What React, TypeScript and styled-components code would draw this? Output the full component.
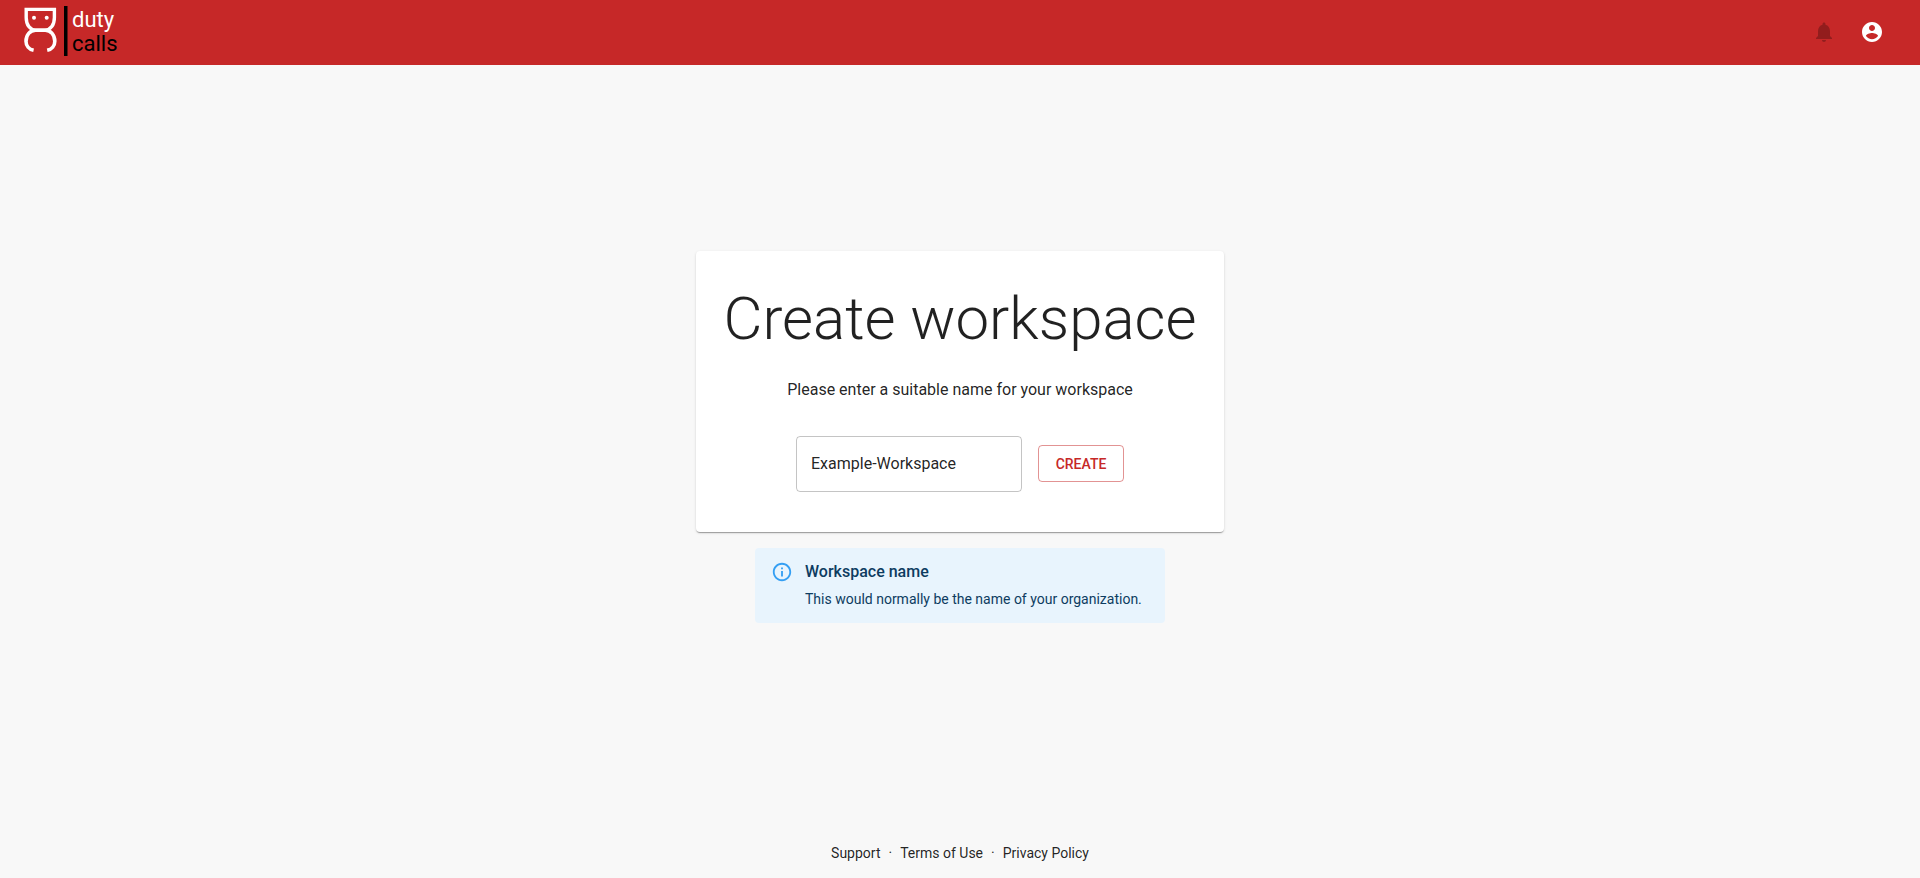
import React, { useState } from "react";
import styled, { createGlobalStyle } from "styled-components";

const GlobalStyle = createGlobalStyle`
  *, *::before, *::after { box-sizing: border-box; }
  body {
    margin: 0;
    background: #f8f8f8;
    color: rgba(0, 0, 0, 0.87);
    font-family: Roboto, "Liberation Sans", sans-serif;
    font-size: 16px;
    line-height: 24px;
  }
`;

const Page = styled.div`
  display: flex;
  flex-direction: column;
  min-height: 100vh;
`;

const Header = styled.header`
  display: flex;
  align-items: center;
  justify-content: space-between;
  height: 65px;
  padding: 0 24px 1px;
  background: #c62828;
`;

const Brand = styled.a`
  display: flex;
  align-items: center;
  gap: 4px;
  color: #000;
  text-decoration: none;
`;

const Mark = styled.svg`
  display: block;
  width: 44px;
  height: 52px;
`;

const BrandName = styled.span`
  display: flex;
  flex-direction: column;
  font-size: 22px;
  line-height: 24px;
`;

const BrandTop = styled.span`
  color: #fff;
`;

const Actions = styled.div`
  display: flex;
  align-items: center;
`;

const IconButton = styled.button`
  display: flex;
  padding: 12px;
  border: 0;
  border-radius: 50%;
  background: transparent;
  color: #fff;
  cursor: pointer;

  &:disabled {
    color: rgba(0, 0, 0, 0.26);
    cursor: default;
  }
`;

const Glyph = styled.svg<{ $size: number }>`
  display: block;
  flex: none;
  width: ${(p) => p.$size}px;
  height: ${(p) => p.$size}px;
  fill: currentColor;
`;

const Main = styled.main`
  display: flex;
  flex: 1;
  flex-direction: column;
  align-items: center;
  justify-content: center;
  gap: 16px;
`;

const Card = styled.section`
  display: flex;
  flex-direction: column;
  align-items: center;
  width: 528px;
  max-width: 100%;
  padding: 32px 24px 40px;
  border-radius: 4px;
  background: #fff;
  text-align: center;
  box-shadow: 0 2px 1px -1px rgba(0, 0, 0, 0.2), 0 1px 1px 0 rgba(0, 0, 0, 0.14),
    0 1px 3px 0 rgba(0, 0, 0, 0.12);
`;

const Title = styled.h1`
  margin: 0 0 23px;
  font-size: 60px;
  font-weight: 300;
  line-height: 72px;
`;

const Prompt = styled.label`
  margin-bottom: 34px;
`;

const Form = styled.form`
  display: flex;
  align-items: center;
  gap: 16px;
`;

const NameInput = styled.input`
  width: 226px;
  height: 56px;
  padding: 0 14px;
  border: 1px solid rgba(0, 0, 0, 0.23);
  border-radius: 4px;
  background: transparent;
  color: inherit;
  font: inherit;
`;

const CreateButton = styled.button`
  min-width: 86px;
  height: 37px;
  padding: 0 15px;
  border: 1px solid rgba(198, 40, 40, 0.5);
  border-radius: 4px;
  background: transparent;
  color: #c62828;
  font: inherit;
  font-size: 14px;
  font-weight: 500;
  text-transform: uppercase;
  cursor: pointer;
`;

const Notice = styled.aside`
  display: flex;
  gap: 12px;
  width: 410px;
  max-width: 100%;
  padding: 12px 16px 14px;
  border-radius: 4px;
  background: #e8f4fd;
  color: #0d3c61;
`;

const NoticeIcon = styled(Glyph)`
  margin-top: 1px;
  color: #2196f3;
  opacity: 0.9;
`;

const NoticeTitle = styled.h2`
  margin: 0 0 5px;
  font-size: 16px;
  font-weight: 500;
  line-height: 24px;
`;

const NoticeText = styled.p`
  margin: 0;
  font-size: 14px;
  line-height: 20px;
`;

const Footer = styled.footer`
  display: flex;
  justify-content: center;
  gap: 8px;
  padding: 35px 16px 15px;
  font-size: 14px;
  line-height: 20px;
`;

const FooterLink = styled.a`
  color: inherit;
  text-decoration: none;
`;

export default function App() {
  const [name, setName] = useState("Example-Workspace");

  return (
    <Page>
      <GlobalStyle />
      <Header>
        <Brand href="#">
          <Mark viewBox="0 0 44 52" aria-hidden="true">
            <path
              d="M2.200 3.400h28.200v8c0 7.500-3.800 12.700-9.500 12.700h-9.200C6 24.100 2.200 18.900 2.200 11.400z"
              fill="none"
              stroke="#fff"
              strokeWidth="3.400"
            />
            <circle cx="10" cy="11.800" r="2" fill="#fff" />
            <circle cx="22.700" cy="11.800" r="2" fill="#fff" />
            <path
              d="M9.600 44.300C5 43.300 2 39.700 2 35.200c0-6.300 4-11 9.600-11h9.600c5.600 0 9.600 4.700 9.600 11 0 4.500-3 8.100-7.600 9.100"
              fill="none"
              stroke="#fff"
              strokeWidth="3.600"
            />
            <path d="M40 0h3.500v50h-3.500z" fill="#000" />
          </Mark>
          <BrandName>
            <BrandTop>duty</BrandTop>
            <span>calls</span>
          </BrandName>
        </Brand>
        <Actions>
          <IconButton type="button" disabled aria-label="Notifications">
            <Glyph $size={24} viewBox="0 0 24 24">
              <path d="M12 22c1.100 0 2-.9 2-2h-4c0 1.100.89 2 2 2zm6-6v-5c0-3.070-1.640-5.640-4.500-6.320V4c0-.83-.67-1.500-1.500-1.500s-1.500.67-1.500 1.500v.68C7.630 5.360 6 7.920 6 11v5l-2 2v1h16v-1l-2-2z" />
            </Glyph>
          </IconButton>
          <IconButton type="button" aria-label="Account">
            <Glyph $size={24} viewBox="0 0 24 24">
              <path d="M12 2C6.480 2 2 6.480 2 12s4.480 10 10 10 10-4.480 10-10S17.520 2 12 2zm0 3c1.660 0 3 1.340 3 3s-1.340 3-3 3-3-1.340-3-3 1.340-3 3-3zm0 14.200c-2.500 0-4.710-1.280-6-3.220.03-1.990 4-3.080 6-3.080 1.990 0 5.970 1.090 6 3.080-1.290 1.940-3.500 3.220-6 3.220z" />
            </Glyph>
          </IconButton>
        </Actions>
      </Header>

      <Main>
        <Card>
          <Title>Create workspace</Title>
          <Prompt htmlFor="workspace-name">
            Please enter a suitable name for your workspace
          </Prompt>
          <Form onSubmit={(e) => e.preventDefault()}>
            <NameInput
              id="workspace-name"
              type="text"
              value={name}
              onChange={(e) => setName(e.target.value)}
            />
            <CreateButton type="submit">Create</CreateButton>
          </Form>
        </Card>

        <Notice>
          <NoticeIcon $size={22} viewBox="0 0 24 24" aria-hidden="true">
            <path d="M11 7h2v2h-2zM11 11h2v6h-2zM12 2C6.480 2 2 6.480 2 12s4.480 10 10 10 10-4.480 10-10S17.520 2 12 2zM12 20c-4.410 0-8-3.590-8-8s3.590-8 8-8 8 3.590 8 8-3.590 8-8 8z" />
          </NoticeIcon>
          <div>
            <NoticeTitle>Workspace name</NoticeTitle>
            <NoticeText>
              This would normally be the name of your organization.
            </NoticeText>
          </div>
        </Notice>
      </Main>

      <Footer>
        <FooterLink href="#">Support</FooterLink>
        <span>·</span>
        <FooterLink href="#">Terms of Use</FooterLink>
        <span>·</span>
        <FooterLink href="#">Privacy Policy</FooterLink>
      </Footer>
    </Page>
  );
}
